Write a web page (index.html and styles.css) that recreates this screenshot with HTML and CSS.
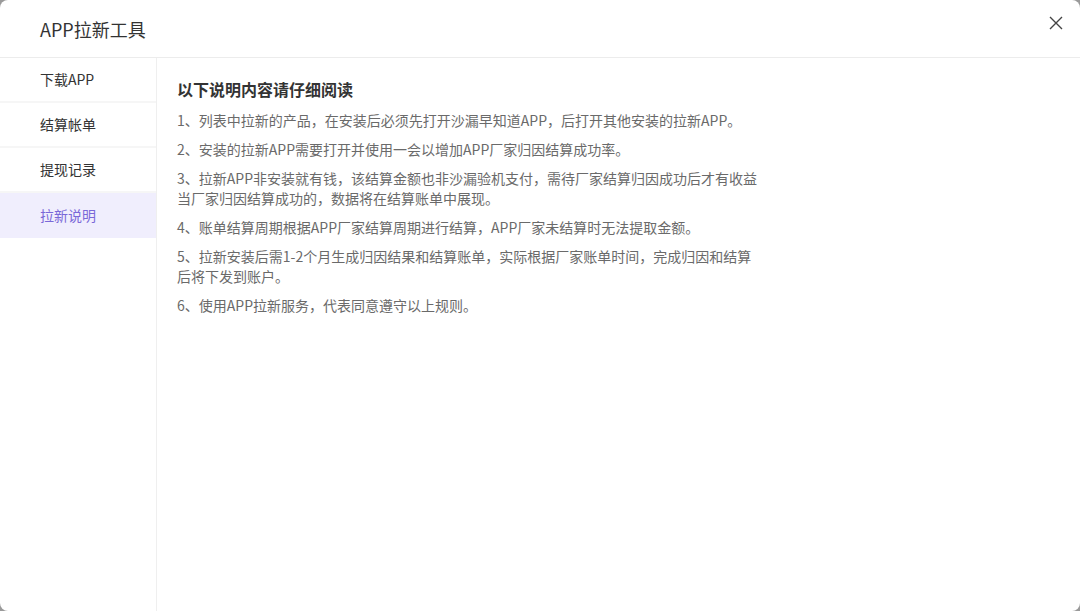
FILE: index.html
```html
<!DOCTYPE html>
<html>
  <head>
    <meta charset="utf-8">
    <link rel="stylesheet" href="styles.css">
  </head>
  <body>
    <div class="dialog">
      <div class="dialog-header">
        <span class="dialog-title">APP拉新工具</span>
        <button class="close" aria-label="关闭">
          <svg width="14" height="14" viewBox="0 0 14 14">
            <path d="M1 1L13 13M13 1L1 13" stroke="#444" stroke-width="1.4" fill="none"/>
          </svg>
        </button>
      </div>
      <div class="dialog-body">
        <ul class="side-menu">
          <li class="menu-item">下载APP</li>
          <li class="menu-item">结算帐单</li>
          <li class="menu-item">提现记录</li>
          <li class="menu-item active">拉新说明</li>
        </ul>
        <div class="content">
          <h3 class="content-title">以下说明内容请仔细阅读</h3>
          <p>1、列表中拉新的产品，在安装后必须先打开沙漏早知道APP，后打开其他安装的拉新APP。</p>
          <p>2、安装的拉新APP需要打开并使用一会以增加APP厂家归因结算成功率。</p>
          <p>3、拉新APP非安装就有钱，该结算金额也非沙漏验机支付，需待厂家结算归因成功后才有收益<br>当厂家归因结算成功的，数据将在结算账单中展现。</p>
          <p>4、账单结算周期根据APP厂家结算周期进行结算，APP厂家未结算时无法提取金额。</p>
          <p>5、拉新安装后需1-2个月生成归因结果和结算账单，实际根据厂家账单时间，完成归因和结算<br>后将下发到账户。</p>
          <p>6、使用APP拉新服务，代表同意遵守以上规则。</p>
        </div>
      </div>
    </div>
  </body>
</html>
```

FILE: styles.css
```css
html, body {
  margin: 0;
  height: 100%;
}
body {
  font-family: "Microsoft YaHei", "Noto Sans CJK SC", "Noto Sans", sans-serif;
  background: #9a9a9a;
  color: #333;
}
.dialog {
  height: 100%;
  background: #fff;
  border-radius: 8px;
  display: flex;
  flex-direction: column;
  overflow: hidden;
}
.dialog-header {
  height: 58px;
  flex-shrink: 0;
  display: flex;
  align-items: center;
  justify-content: space-between;
  padding: 0 17px 0 40px;
  border-bottom: 1px solid #ececec;
  box-sizing: border-box;
}
.dialog-title {
  font-size: 18px;
  color: #333;
  margin-top: 1px;
}
.close {
  border: none;
  background: none;
  padding: 0;
  width: 14px;
  height: 14px;
  cursor: pointer;
  margin-top: -12px;
}
.close svg {
  display: block;
}
.dialog-body {
  flex: 1;
  display: flex;
}
.side-menu {
  list-style: none;
  margin: 0;
  padding: 0;
  width: 156px;
  border-right: 1px solid #efefef;
  flex-shrink: 0;
}
.menu-item {
  height: 43px;
  line-height: 43px;
  padding-left: 40px;
  font-size: 14px;
  color: #333;
  border-bottom: 2px solid #f6f6f6;
  cursor: pointer;
}
.menu-item.active {
  background: #f0eefd;
  color: #7a68d8;
  border-bottom: none;
  height: 45px;
  line-height: 45px;
}
.content {
  padding: 19px 20px 0 20px;
}
.content-title {
  margin: 0 0 9px 0;
  font-size: 16px;
  font-weight: bold;
  line-height: 24px;
  color: #333;
}
.content p {
  margin: 0 0 9px 0;
  font-size: 14px;
  line-height: 20px;
  color: #6a6a6a;
  white-space: nowrap;
}
```
